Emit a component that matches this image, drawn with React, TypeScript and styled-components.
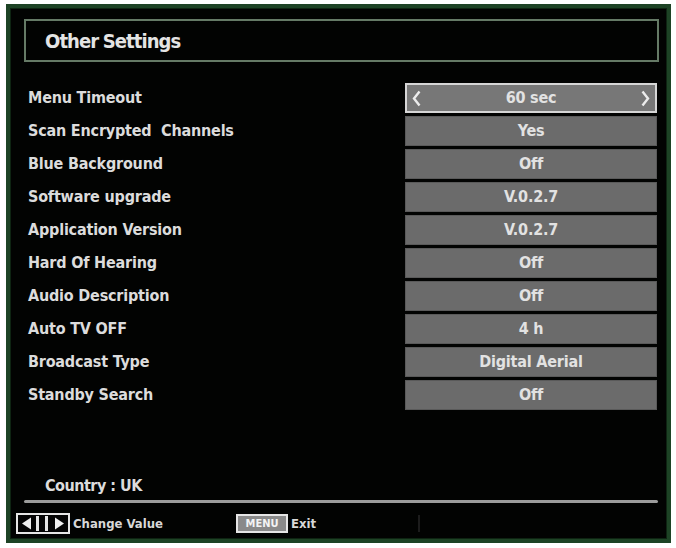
import React from 'react'
import styled, { createGlobalStyle } from 'styled-components'

const GlobalStyle = createGlobalStyle`
  html, body {
    margin: 0;
    padding: 0;
    background: #ffffff;
  }
  body {
    font-family: "DejaVu Sans Condensed", "Liberation Sans Narrow", "Liberation Sans", sans-serif;
  }
`

const Frame = styled.div`
  box-sizing: border-box;
  width: 665px;
  height: 539px;
  margin: 4px 0 0 6px;
  background: #020302;
  border: 4px solid #1d4325;
  box-shadow: inset 0 0 0 1px #0e2412;
  display: flex;
  flex-direction: column;
  padding: 11px 10px 5px 6px;
`

const TitleBox = styled.div`
  box-sizing: border-box;
  height: 43px;
  margin: 0 -2px 0 8px;
  border: 2px solid #657a66;
  display: flex;
  align-items: center;
  padding-left: 19px;
`

const Title = styled.h1`
  margin: 0;
  font-size: 20px;
  font-weight: bold;
  color: #e4e4e4;
  letter-spacing: -0.9px;
  word-spacing: -1px;
`

const List = styled.div`
  margin-top: 19px;
  display: flex;
  flex-direction: column;
  padding-left: 12px;
`

const Row = styled.div`
  height: 33px;
  display: flex;
  align-items: center;
  justify-content: space-between;
`

const Label = styled.span`
  font-size: 16px;
  font-weight: bold;
  color: #dcdcdc;
  letter-spacing: -0.2px;
  white-space: pre;
`

const Value = styled.div<{ $active?: boolean }>`
  box-sizing: border-box;
  width: 252px;
  height: 30px;
  background: ${p => (p.$active ? '#777777' : '#6b6b6b')};
  border: ${p => (p.$active ? '2px solid #d6d6d6' : '1px solid #5a5a5a')};
  display: flex;
  align-items: center;
  justify-content: center;
  position: relative;
  font-size: 16px;
  font-weight: bold;
  color: #e2e2e2;
  letter-spacing: -0.2px;
`

const Chevron = styled.svg<{ $side: 'left' | 'right' }>`
  position: absolute;
  top: 5px;
  ${p => p.$side}: 5px;
`

const Spacer = styled.div`
  flex: 1;
`

const Country = styled.div`
  padding-left: 29px;
  font-size: 16px;
  font-weight: bold;
  color: #dcdcdc;
  letter-spacing: -0.5px;
  margin-bottom: 5px;
`

const Divider = styled.div`
  height: 3px;
  margin: 0 -1px 0 8px;
  background: #9c9c9c;
  border-radius: 2px;
`

const Footer = styled.div`
  height: 22px;
  margin-top: 9px;
  display: flex;
  align-items: center;
`

const Hint = styled.div<{ $width: number }>`
  width: ${p => p.$width}px;
  display: flex;
  align-items: center;
  gap: 3px;
  font-size: 13px;
  font-weight: bold;
  color: #d8d8d8;
  letter-spacing: 0;
`

const KeyCap = styled.span`
  box-sizing: border-box;
  width: 52px;
  height: 19px;
  border: 2px solid #e6e6e6;
  background: #8a8a8a;
  color: #f4f4f4;
  font-size: 11px;
  font-weight: bold;
  display: flex;
  align-items: center;
  justify-content: center;
`

const FaintBar = styled.div`
  width: 2px;
  height: 17px;
  background: #1c1c1c;
`

const ArrowsKey = () => (
  <svg width="54" height="21" viewBox="0 0 54 21">
    <rect x="1" y="1" width="52" height="19" fill="#050505" stroke="#e6e6e6" strokeWidth="2" />
    <polygon points="6,10.5 15,4.5 15,16.5" fill="#f0f0f0" />
    <rect x="20" y="3" width="3" height="15" fill="#e6e6e6" />
    <rect x="29" y="3" width="3" height="15" fill="#e6e6e6" />
    <polygon points="48,10.5 39,4.5 39,16.5" fill="#f0f0f0" />
  </svg>
)

const LeftChevron = () => (
  <Chevron $side="left" width="9" height="17" viewBox="0 0 9 17">
    <polyline points="7.5,1.5 2,8.5 7.5,15.5" fill="none" stroke="#ececec" strokeWidth="2.4" />
  </Chevron>
)

const RightChevron = () => (
  <Chevron $side="right" width="9" height="17" viewBox="0 0 9 17">
    <polyline points="1.5,1.5 7,8.5 1.5,15.5" fill="none" stroke="#ececec" strokeWidth="2.4" />
  </Chevron>
)

const settings: { label: string; value: string }[] = [
  { label: 'Menu Timeout', value: '60 sec' },
  { label: 'Scan Encrypted  Channels', value: 'Yes' },
  { label: 'Blue Background', value: 'Off' },
  { label: 'Software upgrade', value: 'V.0.2.7' },
  { label: 'Application Version', value: 'V.0.2.7' },
  { label: 'Hard Of Hearing', value: 'Off' },
  { label: 'Audio Description', value: 'Off' },
  { label: 'Auto TV OFF', value: '4 h' },
  { label: 'Broadcast Type', value: 'Digital Aerial' },
  { label: 'Standby Search', value: 'Off' },
]

const App: React.FC = () => (
  <>
    <GlobalStyle />
    <Frame>
      <TitleBox>
        <Title>Other Settings</Title>
      </TitleBox>
      <List>
        {settings.map((s, i) => (
          <Row key={s.label}>
            <Label>{s.label}</Label>
            <Value $active={i === 0}>
              {i === 0 && <LeftChevron />}
              {s.value}
              {i === 0 && <RightChevron />}
            </Value>
          </Row>
        ))}
      </List>
      <Spacer />
      <Country>Country : UK</Country>
      <Divider />
      <Footer>
        <Hint $width={220}>
          <ArrowsKey />
          Change Value
        </Hint>
        <Hint $width={182}>
          <KeyCap>MENU</KeyCap>
          Exit
        </Hint>
        <FaintBar />
      </Footer>
    </Frame>
  </>
)

export default App
